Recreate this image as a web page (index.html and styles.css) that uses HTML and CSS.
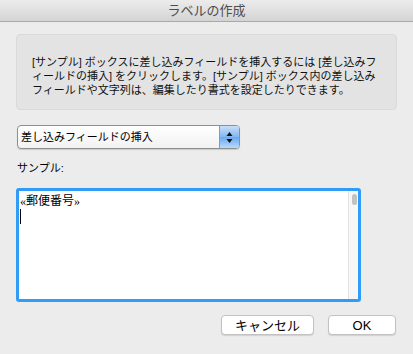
FILE: index.html
```html
<!DOCTYPE html>
<html lang="ja">
<head>
  <meta charset="UTF-8" />
  <title>ラベルの作成</title>
  <link rel="stylesheet" href="styles.css">
</head>
<body>
  <div class="window">
    <header class="titlebar">ラベルの作成</header>

    <main class="content">
      <div class="info-box">
        [サンプル] ボックスに差し込みフィールドを挿入するには [差し込みフ<br>
        ィールドの挿入] をクリックします。[サンプル] ボックス内の差し込み<br>
        フィールドや文字列は、編集したり書式を設定したりできます。
      </div>

      <div class="popup">
        <span class="popup-label">差し込みフィールドの挿入</span>
        <span class="stepper">
          <svg width="7" height="13" viewBox="0 0 7 13">
            <path d="M3.5 1 L6.5 5 L0.5 5 Z" fill="#111"/>
            <path d="M3.5 12 L6.5 8 L0.5 8 Z" fill="#111"/>
          </svg>
        </span>
      </div>

      <div class="sample-label">サンプル:</div>

      <div class="sample-box">
        <div class="sample-text">
          <div>«郵便番号»</div>
          <div class="caret"></div>
        </div>
        <div class="scrollbar"><div class="thumb"></div></div>
      </div>

      <div class="buttons">
        <button class="btn btn-cancel">キャンセル</button>
        <button class="btn btn-ok">OK</button>
      </div>
    </main>
  </div>
</body>
</html>
```

FILE: styles.css
```css
body {
  margin: 0;
  background: #ececec;
  font-family: "Liberation Sans", "Noto Sans CJK JP", sans-serif;
  color: #000;
}
.window {
  width: 413px;
  height: 354px;
  overflow: hidden;
}
.titlebar {
  height: 21px;
  line-height: 22px;
  border-bottom: 1px solid #a9a9a9;
  background: linear-gradient(to bottom, #ececec, #d4d4d4);
  text-align: center;
  font-size: 13px;
  color: #4d4d4d;
}
.content {
  padding: 12px 16px 0 16px;
}
.info-box {
  height: 43px;
  padding: 20px 15px 11px 15px;
  background: #e3e3e3;
  border: 1px solid #dadada;
  border-radius: 4px;
  font-size: 11px;
  line-height: 14px;
  white-space: nowrap;
  color: #111;
}
.popup {
  display: flex;
  width: 221px;
  height: 22px;
  margin: 15px 0 0 1px;
  border: 1px solid #8f8f8f;
  border-radius: 4px;
  background: linear-gradient(to bottom, #ffffff, #f2f2f2);
  box-shadow: 0 1px 1px rgba(0, 0, 0, 0.15);
  overflow: hidden;
}
.popup-label {
  flex: 1;
  padding-left: 3px;
  font-size: 11px;
  line-height: 22px;
}
.stepper {
  width: 19px;
  display: flex;
  align-items: center;
  justify-content: center;
  border-left: 1px solid #6f9fd8;
  background: linear-gradient(to bottom, #c9defa, #82b6f1 50%, #6aa8f0 51%, #b8dafd);
}
.sample-label {
  margin: 12px 0 0 1px;
  font-size: 11px;
  line-height: 14px;
}
.sample-box {
  display: flex;
  width: 339px;
  height: 108px;
  margin-top: 13px;
  border: 3px solid #2f9cf8;
  border-radius: 3px;
  background: #fff;
}
.sample-text {
  flex: 1;
  padding: 2px 0 0 1px;
  font-family: "Liberation Serif", "Noto Sans CJK JP", serif;
  font-size: 12px;
  line-height: 16px;
}
.caret {
  width: 1px;
  height: 15px;
  background: #000;
}
.scrollbar {
  width: 10px;
  background: #f7f7f7;
  border-left: 1px solid #e3e3e3;
  padding: 3px 0 0 3px;
  box-sizing: border-box;
}
.thumb {
  width: 5px;
  height: 11px;
  background: #c2c2c2;
  border-radius: 3px;
}
.buttons {
  display: flex;
  justify-content: flex-end;
  gap: 14px;
  margin-top: 13px;
  padding-right: 1px;
}
.btn {
  height: 20px;
  padding: 0;
  background: #fff;
  border: 1px solid #c2c2c2;
  border-radius: 4px;
  box-shadow: 0 1px 1px rgba(0, 0, 0, 0.12);
  font-family: "Liberation Sans", "Noto Sans CJK JP", sans-serif;
  font-size: 13px;
  line-height: 17px;
  color: #000;
}
.btn-cancel {
  width: 93px;
}
.btn-ok {
  width: 68px;
}
```
